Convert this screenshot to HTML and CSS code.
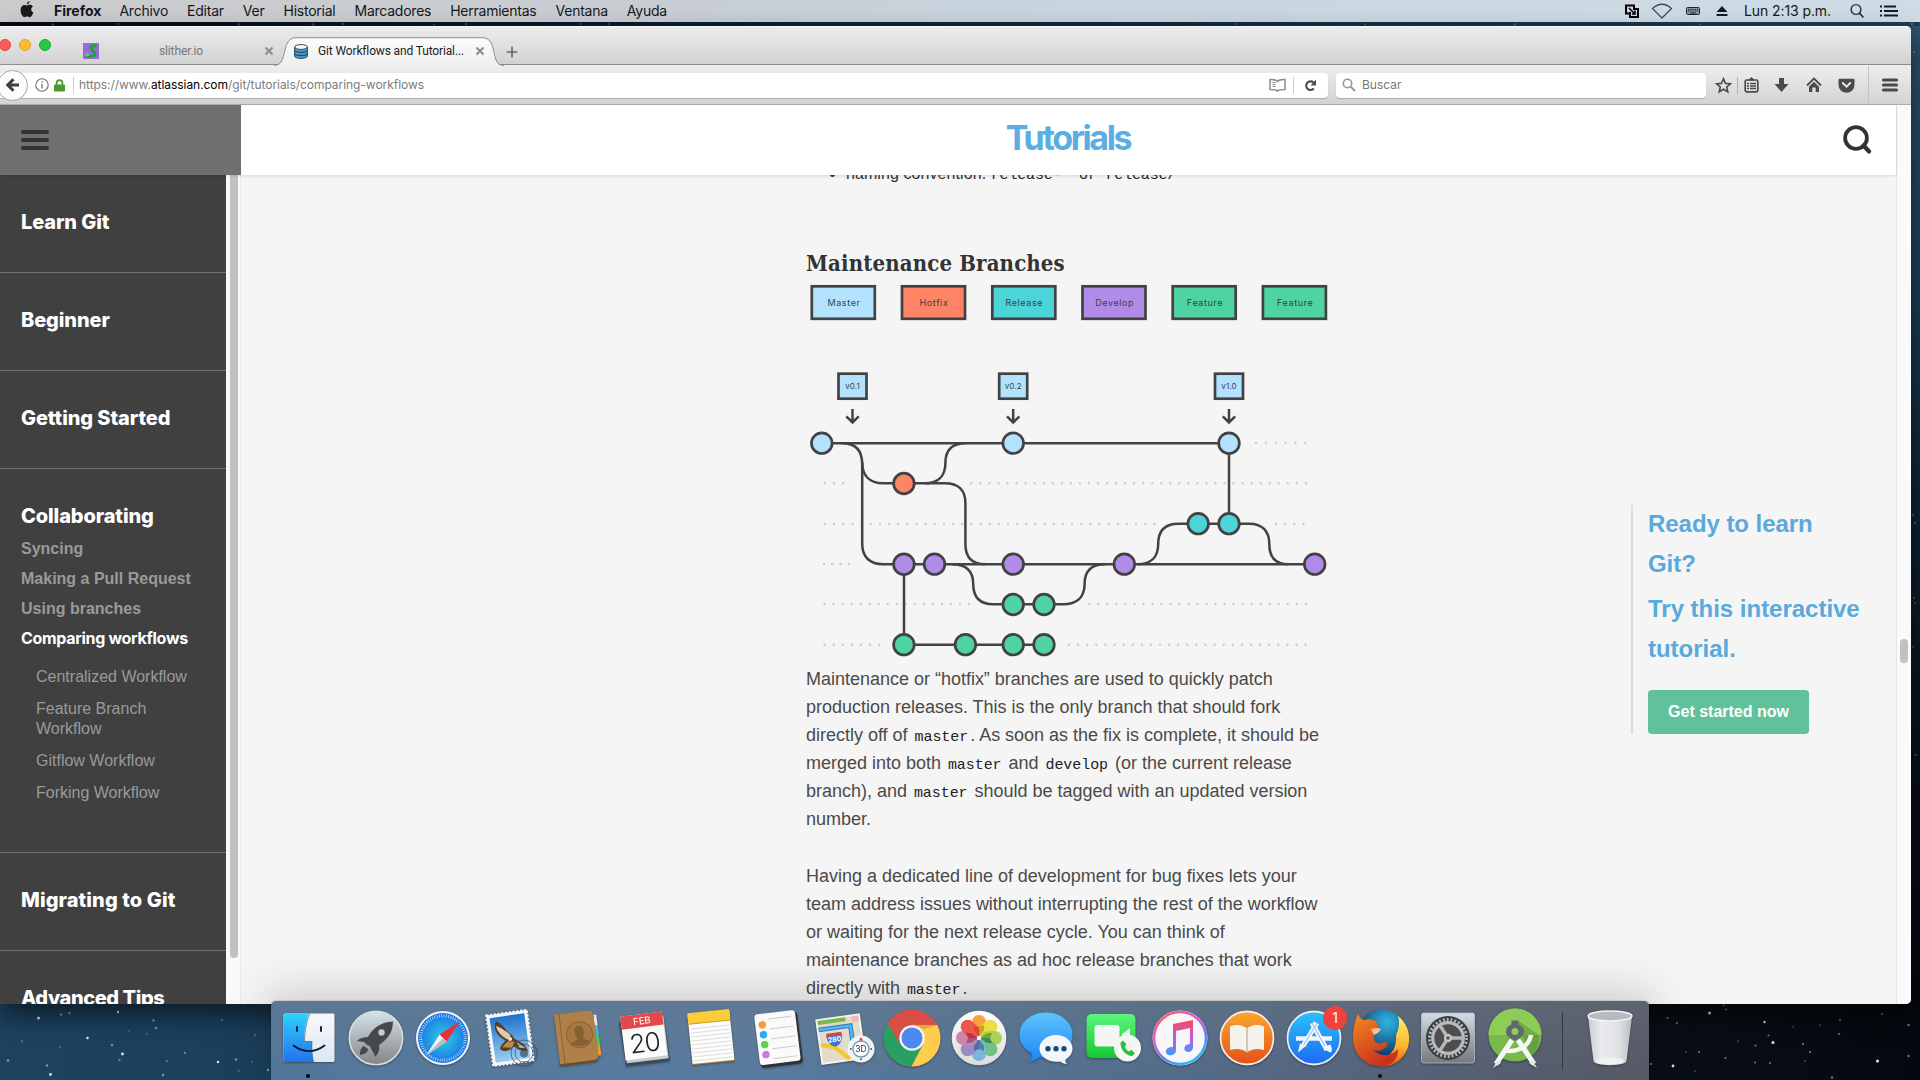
FILE: index.html
```html
<!DOCTYPE html>
<html lang="es">
<head>
<meta charset="utf-8">
<title>Git Workflows and Tutorials</title>
<link rel="stylesheet" href="styles.css">
</head>
<body>
<div class="desktop">
  <svg class="stars" width="1920" height="1080" viewBox="0 0 1920 1080" aria-hidden="true">
    <g fill="#fff">
      <g opacity=".85"><circle cx="38.500" cy="1018" r="1.500"/><circle cx="87.500" cy="1038" r="1.300"/><circle cx="122.500" cy="1054" r="1.400"/><circle cx="50.500" cy="1074.500" r="1.400"/><circle cx="118" cy="1012" r="1.200"/><circle cx="218" cy="1062" r="1.300"/><circle cx="1709.500" cy="1013" r="1.500"/><circle cx="1773" cy="1042.500" r="1.500"/><circle cx="1877.500" cy="1061" r="1.600"/><circle cx="1673" cy="1066" r="1.400"/><circle cx="1764.500" cy="1022" r="1.200"/></g>
      <g opacity=".45"><circle cx="61" cy="1014.500" r="1.200"/><circle cx="69.500" cy="1013" r="1.200"/><circle cx="153.500" cy="1020.500" r="1.200"/><circle cx="156" cy="1028" r="1.200"/><circle cx="112" cy="1045" r="1.200"/><circle cx="119.500" cy="1060" r="1.100"/><circle cx="47" cy="1065.500" r="1.300"/><circle cx="8" cy="1060.500" r="1.200"/><circle cx="163" cy="1075" r="1.200"/><circle cx="236" cy="1059.500" r="1.200"/><circle cx="268" cy="1070" r="1.200"/><circle cx="185" cy="1053" r="1"/><circle cx="1667.500" cy="1018" r="1.100"/><circle cx="1677" cy="1023" r="1"/><circle cx="1723.500" cy="1005.500" r="1"/><circle cx="1726" cy="1009.500" r="1"/><circle cx="1768.500" cy="1035.500" r="1"/><circle cx="1755.500" cy="1045.500" r="1.100"/><circle cx="1803" cy="1044" r="1.100"/><circle cx="1810" cy="1052" r="1.100"/><circle cx="1699" cy="1052" r="1"/><circle cx="1725.500" cy="1058" r="1.100"/><circle cx="1755" cy="1062.500" r="1"/><circle cx="1770" cy="1063" r="1"/><circle cx="1832" cy="1077.500" r="1.200"/><circle cx="1908.500" cy="1025" r="1.200"/><circle cx="1908.500" cy="1056" r="1.200"/><circle cx="1840" cy="1020" r="1"/><circle cx="1839" cy="1034" r="1"/><circle cx="1882" cy="1014" r="1"/><circle cx="1651" cy="1064" r="1"/></g>
      <g opacity=".22"><circle cx="22" cy="1041" r="1.200"/><circle cx="60" cy="1047" r="1"/><circle cx="129" cy="1031" r="1"/><circle cx="147" cy="1034" r="1"/><circle cx="167" cy="1061" r="1.300"/><circle cx="222" cy="1020" r="1.200"/><circle cx="255" cy="1035" r="1.200"/><circle cx="252" cy="1062" r="1"/><circle cx="239" cy="1071" r="1"/><circle cx="1686" cy="1052" r="1"/><circle cx="1738" cy="1041" r="1"/><circle cx="1793" cy="1027" r="1"/><circle cx="1820" cy="1025" r="1"/><circle cx="1805" cy="1061" r="1"/><circle cx="1695" cy="1071" r="1"/><circle cx="1913" cy="515" r="1.200"/><circle cx="1915" cy="523" r="1.200"/><circle cx="1914" cy="598" r="1.200"/><circle cx="1915" cy="603" r="1"/><circle cx="1913" cy="647" r="1"/><circle cx="1915.500" cy="755" r="1.300"/><circle cx="1914" cy="52" r="1.200"/><circle cx="1912" cy="24" r="1.200"/><circle cx="53" cy="24.500" r="1.200"/><circle cx="118" cy="24" r="1"/><circle cx="239" cy="24.500" r="1.200"/><circle cx="313" cy="24.500" r="1.200"/><circle cx="343" cy="24" r="1.200"/><circle cx="466" cy="24" r="1.300"/><circle cx="434" cy="24.500" r="1"/><circle cx="581" cy="24" r="1"/><circle cx="609" cy="24" r="1"/><circle cx="1515" cy="24.500" r="1.300"/><circle cx="1365" cy="24.500" r="1"/><circle cx="1236" cy="24" r="1"/><circle cx="1700" cy="24.500" r="1"/></g>
    </g>
  </svg>

  <header class="menubar">
    <svg class="apple" width="14" height="17" viewBox="0 0 14 17"><path fill="#1a1a1a" d="M9.600.3c.1 1.500-1.300 3.100-2.700 3.100C6.700 1.900 8.100.5 9.600.3zM7.100 4.500c.7 0 1.500-.7 2.800-.7 1.300 0 2.400.7 3 1.600-2.500 1.500-2.100 5 .5 6-.6 1.800-2.200 4.800-3.700 4.800-1 0-1.400-.6-2.600-.6-1.200 0-1.700.6-2.600.6C2.700 16.200.6 12.500.6 9.200c0-3.500 2.200-5.300 4.100-5.300 1.100 0 1.900.6 2.400.6z"/></svg>
    <nav class="menus">
      <b class="m-app">Firefox</b><span>Archivo</span><span>Editar</span><span>Ver</span><span>Historial</span><span>Marcadores</span><span>Herramientas</span><span>Ventana</span><span>Ayuda</span>
    </nav>
    <div class="status">
      <svg width="16" height="16" viewBox="0 0 16 16"><g fill="none" stroke="#000" stroke-width="2"><path d="M7 10.500H2v-8h8v3"/><path d="M9 6h5v8H6V9"/><path d="M5 5l6 6M11 7.500V11H8" stroke-width="1.500"/></g></svg>
      <svg width="22" height="16" viewBox="0 0 22 16"><path d="M1.500 5.500Q11-3 20.500 5.500L11 15z" fill="none" stroke="#3c4a55" stroke-width="1.200" stroke-linejoin="round"/></svg>
      <svg width="14" height="8" viewBox="0 0 14 8"><rect x=".5" y=".5" width="13" height="7" rx="1" fill="#8b969e" stroke="#1c262e"/><path d="M2 2.500h10M2 4h10" stroke="#1c262e" stroke-dasharray="1 .8"/><path d="M4 6h6" stroke="#1c262e"/></svg>
      <svg width="12" height="12" viewBox="0 0 12 12"><path d="M6 1l5.500 6H.5zM.5 9h11v2H.5z" fill="#141c22"/></svg>
      <span class="clock">Lun 2:13 p.m.</span>
      <svg width="16" height="16" viewBox="0 0 16 16"><circle cx="7" cy="6.500" r="4.900" fill="none" stroke="#26323a" stroke-width="1.400"/><path d="M10.400 10.200l4 4.300" stroke="#26323a" stroke-width="1.700"/></svg>
      <svg width="18" height="12" viewBox="0 0 18 12"><path d="M0 1.500h2M4 1.500h12M0 6h2M4 6h14M0 10.500h2M4 10.500h14" stroke="#141c22" stroke-width="1.800"/></svg>
    </div>
  </header>

  <div class="window">
    <div class="tabbar">
      <div class="lights"><i class="red"></i><i class="yellow"></i><i class="green"></i></div>
      <div class="tab">
        <svg width="16" height="16" viewBox="0 0 16 16"><rect width="16" height="16" fill="#a067dc"/><path d="M12.500 3C9.500 2 7.500 3.200 8.300 5.500S13 8.500 12 11s-5 2.500-8 2" fill="none" stroke="#14a834" stroke-width="2.800" stroke-linecap="round"/><circle cx="4.300" cy="11.500" r="2" fill="#5fc873"/></svg>
        <span class="tab-title">slither.io</span>
        <svg width="10" height="10" viewBox="0 0 10 10"><path d="M1.500 1.500l7 7M8.500 1.500l-7 7" stroke="#8c8c8c" stroke-width="2"/></svg>
      </div>
      <div class="tab active">
        <svg class="tab-shape" width="230" height="30" viewBox="0 0 230 30"><defs><linearGradient id="tabg" x2="0" y2="1"><stop stop-color="#fbfbfb"/><stop offset="1" stop-color="#efefef"/></linearGradient></defs><path d="M0 29C15 29 6 1 22 1H208C225 1 215 29 230 29V30H0z" fill="url(#tabg)"/><path d="M0 28.500C15 28.500 6 .7 22 .7H208C225 .7 215 28.500 230 28.500" fill="none" stroke="#8e8e8e"/></svg>
        <svg width="14" height="15" viewBox="0 0 14 15"><path d="M.6 3v9c0 3.200 12.800 3.200 12.800 0V3" fill="#4a9fd8" stroke="#2f4858"/><path d="M.6 6.300c0 2.800 12.800 2.800 12.800 0M.6 9.400c0 2.800 12.800 2.800 12.800 0" fill="none" stroke="#2f4858" stroke-width="1.300"/><ellipse cx="7" cy="3" rx="6.400" ry="2.400" fill="#f5f7f8" stroke="#2f4858"/></svg>
        <span class="tab-title">Git Workflows and Tutorial...</span>
        <svg width="10" height="10" viewBox="0 0 10 10"><path d="M1.500 1.500l7 7M8.500 1.500l-7 7" stroke="#8c8c8c" stroke-width="2"/></svg>
      </div>
      <svg class="newtab" width="12" height="12" viewBox="0 0 12 12"><path d="M6 .8v10.400M.8 6h10.400" stroke="#6a6a6a" stroke-width="1.700"/></svg>
    </div>

    <div class="toolbar">
      <div class="urlbar">
        <div class="back"><svg width="16" height="16" viewBox="0 0 16 16"><path d="M14 8H3M8.500 2.200L2.700 8l5.800 5.800" fill="none" stroke="#3f3f3f" stroke-width="3"/></svg></div>
        <svg width="14" height="14" viewBox="0 0 14 14"><circle cx="7" cy="7" r="6.200" fill="none" stroke="#6f6f6f" stroke-width="1.100"/><path d="M7 6v4.500M7 3.200v1.500" stroke="#6f6f6f" stroke-width="1.300"/></svg>
        <svg class="lock" width="11" height="13" viewBox="0 0 11 13"><path d="M2.600 6V4a2.900 2.900 0 0 1 5.800 0v2" fill="none" stroke="#4b9a27" stroke-width="1.800"/><rect y="5.500" width="11" height="7" rx="1" fill="#4b9a27"/></svg>
        <i class="sep"></i>
        <span class="url">https://www.<b>atlassian.com</b>/git/tutorials/comparing-workflows</span>
        <svg width="17" height="14" viewBox="0 0 17 14"><path d="M8.500 13C7.500 11.500 6 11.500 1 11.500v-10C5 1.500 7 1.300 8.500 3.500C10 1.300 12 1.500 16 1.500v10c-5 0-6.500 0-7.500 1.500z" fill="none" stroke="#8a8a8a" stroke-width="1.500"/><path d="M3.500 4.500h3M3.500 6.500h3M3.500 8.500h3" stroke="#8a8a8a"/></svg>
        <i class="sep"></i>
        <svg class="reload" width="13" height="13" viewBox="0 0 13 13"><path d="M9.800 9.500A4.300 4.300 0 1 1 9.500 3.600" fill="none" stroke="#4b4b4b" stroke-width="2.100"/><path d="M12 .6V6.500H6.500z" fill="#4b4b4b"/></svg>
      </div>
      <div class="search">
        <svg width="14" height="14" viewBox="0 0 14 14"><circle cx="5.500" cy="5.500" r="4.200" fill="none" stroke="#979797" stroke-width="1.600"/><path d="M8.600 8.600l4.400 4.400" stroke="#979797" stroke-width="2"/></svg>
        <span>Buscar</span>
      </div>
      <div class="tools">
        <svg width="17" height="17" viewBox="0 0 17 17"><path d="M8.500 1.800l2 4.600 4.900.4-3.700 3.200 1.100 4.900-4.300-2.600-4.300 2.600 1.100-4.900L1.600 6.800l4.900-.4z" fill="none" stroke="#4b4b4b" stroke-width="1.600"/></svg>
        <i class="sep"></i>
        <svg width="15" height="16" viewBox="0 0 15 16"><rect x="1.200" y="3" width="12.600" height="11.800" rx="1.500" fill="none" stroke="#4b4b4b" stroke-width="1.700"/><path d="M4 3.500L7.500 0 11 3.500z" fill="#4b4b4b"/><path d="M3 6.500h2M6 6.500h6M3 9h2M6 9h6M3 11.500h2M6 11.500h6" stroke="#4b4b4b" stroke-width="1.500"/></svg>
        <svg width="15" height="16" viewBox="0 0 15 16"><path d="M5 1h5v6h4.500l-7 8-7-8H5z" fill="#4b4b4b"/></svg>
        <svg width="16" height="16" viewBox="0 0 16 16"><path d="M1 8.500l7-7 7 7" fill="none" stroke="#4b4b4b" stroke-width="1.800"/><path d="M8 4.800l5 5V15H9.700v-4.500H6.300V15H3V9.800z" fill="#4b4b4b"/></svg>
        <svg width="17" height="15" viewBox="0 0 17 15"><path d="M2 .8h13c1 0 1.500.6 1.500 1.500v4.500a8 8 0 0 1-16 0V2.300C.5 1.400 1 .8 2 .8z" fill="#4b4b4b"/><path d="M4.800 5l3.700 3.700L12.200 5" fill="none" stroke="#e8e8e8" stroke-width="2" stroke-linecap="round"/></svg>
        <i class="sep tall"></i>
        <svg width="16" height="14" viewBox="0 0 16 14"><path d="M1.500 2h13M1.500 7h13M1.500 12h13" stroke="#4b4b4b" stroke-width="3.200" stroke-linecap="round"/></svg>
      </div>
    </div>

    <div class="page">
      <div class="page-main">
        <div class="page-head">
          <div class="head-menu"><i></i><i></i><i></i></div>
          <h1>Tutorials</h1>
          <svg class="head-search" width="30" height="30" viewBox="0 0 30 30"><circle cx="13" cy="13" r="10.900" fill="none" stroke="#333" stroke-width="3.800"/><path d="M20.500 20.500l5.600 6" stroke="#333" stroke-width="4.200" stroke-linecap="round"/></svg>
        </div>
        <div class="page-body">
          <aside class="sidebar">
            <section><h2 class="w1">Learn Git</h2></section>
            <section><h2 class="w1">Beginner</h2></section>
            <section><h2 class="w1">Getting Started</h2></section>
            <section class="open">
              <h2 class="w1">Collaborating</h2>
              <ul class="topics"><li>Syncing</li><li>Making a Pull Request</li><li>Using branches</li><li class="current">Comparing workflows</li></ul>
              <ul class="subtopics"><li>Centralized Workflow</li><li>Feature Branch Workflow</li><li>Gitflow Workflow</li><li>Forking Workflow</li></ul>
            </section>
            <section><h2 class="w2">Migrating to Git</h2></section>
            <section><h2 class="w3">Advanced Tips</h2></section>
          </aside>
          <div class="side-track"><i></i></div>
          <main class="content">
            <article>
              <ul class="bullets"><li>naming convention: <code>release-* or release/*</code></li></ul>
              <h3>Maintenance Branches</h3>
              <svg class="diagram" width="524" height="387" viewBox="806 278 524 387">
                <g stroke="#cbcbcb" stroke-width="2.400" stroke-linecap="round" fill="none">
                  <path d="M1256 443H1306" stroke-dasharray="0 9.850"/>
                  <path d="M825 483.300H845M971.400 483.300H1306.500" stroke-dasharray="0 9.040"/>
                  <path d="M825 523.700H1156M1276 523.700H1306.500" stroke-dasharray="0 9.150"/>
                  <path d="M824 564H850" stroke-dasharray="0 8.300"/>
                  <path d="M824.600 604.300H969M1089.300 604.300H1306.500" stroke-dasharray="0 9.020"/>
                  <path d="M824.600 644.700H880M1069 644.700H1306.500" stroke-dasharray="0 9.100"/>
                </g>
                <g stroke="#424242" stroke-width="2.500" fill="none">
                  <path d="M822 443.200H1229M904 564.200H1315M904 644.700H1044M904 564V645M1229 443V524"/>
                  <path d="M842 443.200C855 443.200 862.200 450 862.200 464V544C862.200 557 870 564.200 883 564.200H904"/>
                  <path d="M862.200 462C862.200 476 870 483.300 883 483.300H945C958 483.300 965.400 490 965.400 503V544C965.400 557 972 564.200 985 564.200"/>
                  <path d="M925 483.300C938 483.300 945.400 476 945.400 463S952 443.200 965.500 443.200"/>
                  <path d="M952 564.200C966 564.200 973.200 571 973.200 584S980 604.300 993.500 604.300H1063C1077 604.300 1084.600 597 1084.600 584S1091 564.200 1105 564.200"/>
                  <path d="M1138 564.200C1151 564.200 1158.200 557 1158.200 544S1165 523.700 1178.500 523.700H1249.500C1262 523.700 1269.300 531 1269.300 544S1275 564.200 1288 564.200"/>
                  <path d="M852.500 409V422.500M846.300 416.300L852.500 422.500L858.700 416.300M1013.200 409V422.500M1007 416.300L1013.200 422.500L1019.400 416.300M1229 409V422.500M1222.800 416.300L1229 422.500L1235.200 416.300"/>
                </g>
                <g stroke="#424242" stroke-width="2.700">
                  <g fill="#b3e2ff"><circle cx="821.800" cy="443.200" r="10.300"/><circle cx="1013.200" cy="443.200" r="10.300"/><circle cx="1229" cy="443.200" r="10.300"/><rect x="811.800" y="286.300" width="63" height="32.500"/><rect x="838.500" y="373.700" width="28" height="25"/><rect x="999.200" y="373.700" width="28" height="25"/><rect x="1215" y="373.700" width="28" height="25"/></g>
                  <g fill="#ff8465"><circle cx="903.900" cy="483.500" r="10.300"/><rect x="902" y="286.300" width="63" height="32.500"/></g>
                  <g fill="#4dd4d8"><circle cx="1198.200" cy="523.700" r="10.300"/><circle cx="1229" cy="523.700" r="10.300"/><rect x="992.300" y="286.300" width="63" height="32.500"/></g>
                  <g fill="#b18be8"><circle cx="903.900" cy="564.200" r="10.300"/><circle cx="934.500" cy="564.200" r="10.300"/><circle cx="1013.200" cy="564.200" r="10.300"/><circle cx="1124.300" cy="564.200" r="10.300"/><circle cx="1314.700" cy="564.200" r="10.300"/><rect x="1082.500" y="286.300" width="63" height="32.500"/></g>
                  <g fill="#4fd3a2"><circle cx="1013.200" cy="604.500" r="10.300"/><circle cx="1044" cy="604.500" r="10.300"/><circle cx="903.900" cy="644.700" r="10.300"/><circle cx="965.400" cy="644.700" r="10.300"/><circle cx="1013.200" cy="644.700" r="10.300"/><circle cx="1044" cy="644.700" r="10.300"/><rect x="1172.700" y="286.300" width="63" height="32.500"/><rect x="1262.900" y="286.300" width="63" height="32.500"/></g>
                </g>
                <g class="legend"><text x="844" y="306.300">Master</text><text x="934" y="306.300">Hotfix</text><text x="1024.300" y="306.300">Release</text><text x="1114.700" y="306.300">Develop</text><text x="1205" y="306.300">Feature</text><text x="1295.200" y="306.300">Feature</text></g>
                <g class="legend versions"><text x="852.500" y="389.300">v0.1</text><text x="1013.200" y="389.300">v0.2</text><text x="1229" y="389.300">v1.0</text></g>
              </svg>
              <p>Maintenance or “hotfix” branches are used to quickly patch<br>production releases. This is the only branch that should fork<br>directly off of <code>master</code>. As soon as the fix is complete, it should be<br>merged into both <code>master</code> and <code>develop</code> (or the current release<br>branch), and <code>master</code> should be tagged with an updated version<br>number.</p>
              <p>Having a dedicated line of development for bug fixes lets your<br>team address issues without interrupting the rest of the workflow<br>or waiting for the next release cycle. You can think of<br>maintenance branches as ad hoc release branches that work<br>directly with <code>master</code>.</p>
            </article>
            <div class="promo">
              <h4>Ready to learn Git?</h4>
              <h4>Try this interactive tutorial.</h4>
              <a class="button">Get started now</a>
            </div>
          </main>
        </div>
      </div>
      <div class="page-track"><i></i></div>
    </div>
  </div>

  <div class="dock">
    <div class="app running">
      <svg viewBox="-30 -30 60 60"><defs><linearGradient id="fa" x2="0" y2="1"><stop stop-color="#2ed0fb"/><stop offset="1" stop-color="#2472ee"/></linearGradient><linearGradient id="fb" x2="0" y2="1"><stop stop-color="#f8f8fb"/><stop offset="1" stop-color="#dde6f2"/></linearGradient></defs><rect x="-25.500" y="-24.500" width="51" height="48.500" rx="1.500" fill="url(#fb)"/><path d="M-24-24.500H0C-3.500-16-5-5-5 3.500H3C2.500 11 3 18 4.500 24H-24a1.500 1.500 0 0 1-1.500-1.500V-23a1.500 1.500 0 0 1 1.500-1.500z" fill="url(#fa)"/><path d="M1-24.500C-3-16-4.500-5-4.500 3.500H3C2.500 11 3 18 4.500 24" fill="none" stroke="#27658f" stroke-width=".7"/><path d="M-12-11v4M12-11v4M-15.500 7.500C-6 15 6 15 15.500 7.500" fill="none" stroke="#0c1a2a" stroke-width="1.900" stroke-linecap="round"/></svg>
    </div>
    <div class="app">
      <svg viewBox="-30 -30 60 60"><defs><linearGradient id="la" x2="0" y2="1"><stop stop-color="#d3e3ea"/><stop offset="1" stop-color="#858585"/></linearGradient></defs><circle r="26.700" fill="url(#la)" stroke="#d9dde0" stroke-width="1.600"/><path d="M17-16.500C5-16-3-10-8-1C-12-1-16 0-19 3L-12 4L-9 7L-6 8C-5 12-2 14-1 19C3 15 4 11 3 7C12 1 17-6 17-16.500zM-12 8C-16 10-16 14-16 17C-12 16-8 15-8 11z" fill="#45484c"/><circle cx="5.500" cy="-5.500" r="3.200" fill="#c3ccd1"/></svg>
    </div>
    <div class="app">
      <svg viewBox="-30 -30 60 60"><defs><radialGradient id="sa"><stop stop-color="#2fd0dc"/><stop offset="1" stop-color="#1b74e8"/></radialGradient></defs><circle r="27" fill="#f4f5f6"/><circle r="25" fill="url(#sa)"/><circle r="22.300" fill="none" stroke="#cde9f7" stroke-width="3" stroke-dasharray=".7 1.635"/><path d="M17.500-17L3.500 3.500L-3.500-3.500z" fill="#ee2e35"/><path d="M-17 17.500L-3.500-3.500L3.500 3.500z" fill="#f2f3f4"/><path d="M-17 17.500L0 0L3.500 3.500z" fill="#b9bec3"/></svg>
    </div>
    <div class="app">
      <svg viewBox="-30 -30 60 60"><defs><linearGradient id="ma" x2="0" y2="1"><stop stop-color="#1c74d2"/><stop offset="1" stop-color="#9ccdf0"/></linearGradient></defs><g transform="rotate(-8)"><rect x="-20.500" y="-25.500" width="41" height="51" fill="#f7f7f7" stroke="#f7f7f7" stroke-width="2" stroke-dasharray="2.200 1.600"/><rect x="-17.500" y="-22.500" width="35" height="45" fill="url(#ma)"/><path d="M-12-18C-16-12-13-4-5 2C-9 5-12 8-11 10C-6 14-1 12 3 9C7 14 12 16 16 15C15 9 10 5 4 1C3-4-1-5-3-9C-5-13-8-17-12-18z" fill="#5b3f24"/><path d="M-12-14C-12-8-8-3-3 1L1-2C0-6-4-7-6-10z" fill="#d9cbb5"/><path d="M6 5L14 12L8 11z" fill="#cdb893"/><path d="M-9 8L-3 3L4 4L1 10z" fill="#c08846"/><circle cx="0" cy="1" r="2" fill="#f1e9da"/></g><g fill="none" stroke="#3c536b" opacity=".75"><circle cx="14" cy="15" r="13"/><circle cx="14" cy="15" r="9"/></g><circle cx="14" cy="15.500" r="4" fill="#35506c" opacity=".7"/></svg>
    </div>
    <div class="app">
      <svg viewBox="-30 -30 60 60"><g transform="rotate(-7)"><path d="M16-21h6v11h-6z" fill="#e4e6e8"/><path d="M16-10h6v10h-6z" fill="#41b7df"/><path d="M16 0h6v10h-6z" fill="#51c95c"/><path d="M16 10h6v10h-6z" fill="#f39c2c"/><path d="M-20-24H14q5 0 5 5V21q0 5-5 5H-20z" fill="#6e4d25"/><path d="M-20-26H14q5 0 5 5V19q0 5-5 5H-20z" fill="#b0804a"/><path d="M-15-26V24" stroke="#8a6234"/><circle cx="3" cy="-3" r="13" fill="#a87843" stroke="#8d6535" stroke-width="1.200"/><path d="M3-12c4 0 5 3 4.500 6.500C7-2 6 0 6 1c1 2 6 2 7 4.500C10 9-4 9-7 5.500C-6 3-1 3 0 1C0 0-1-2-1.500-5.500C-2-9-1-12 3-12z" fill="#87602f"/></g></svg>
    </div>
    <div class="app">
      <svg viewBox="-30 -30 60 60"><g transform="rotate(-7)"><path d="M-23-18L-21 26H23L22-22z" fill="#3d4a57"/><rect x="-20" y="-20" width="42" height="43" fill="#c9cdd0"/><rect x="-21" y="-24" width="42" height="44" fill="#fbfbfb"/><rect x="-21" y="-24" width="42" height="13" fill="#e5484b"/><text class="cal-m" x="0" y="-14">FEB</text><text class="cal-d" x="0" y="14">20</text></g></svg>
    </div>
    <div class="app">
      <svg viewBox="-30 -30 60 60"><g transform="rotate(-6)"><rect x="-21" y="-24" width="42" height="49" fill="#b28a2a"/><rect x="-21" y="-25" width="42" height="49" fill="#fdfdfb"/><rect x="-21" y="-27" width="42" height="11" fill="#fbcd3a"/><path d="M-21-16H21" stroke="#c79a1e"/><path d="M-20-11H20M-20-7H20M-20-3H20M-20 1H20M-20 5H20M-20 9H20M-20 13H20M-20 17H20M-20 21H20" stroke="#d6d6d6" stroke-width=".8"/></g></svg>
    </div>
    <div class="app">
      <svg viewBox="-30 -30 60 60"><g transform="rotate(-7)"><rect x="-20" y="-24" width="42" height="52" rx="3.500" fill="#2c3239"/><rect x="-21" y="-26" width="41" height="51" rx="3.500" fill="#fafafa"/><path d="M-8-20H16M-7-10H17M-7 0H17M-7 10H17M-7 20H17" stroke="#c9c9c9" stroke-width=".9"/><circle cx="-14" cy="-15" r="3.700" fill="#fb9a2d"/><circle cx="-14" cy="-5" r="3.700" fill="#2ba9f1"/><circle cx="-14" cy="5" r="3.700" fill="#5fd349"/><circle cx="-14" cy="15" r="3.700" fill="#cb77e0"/></g></svg>
    </div>
    <div class="app">
      <svg viewBox="-30 -30 60 60"><g transform="translate(-4,0) rotate(-8)"><rect x="-23" y="-22" width="45" height="46" fill="#f6f4ee"/><rect x="-21" y="-20" width="41" height="42" fill="#e3dccb"/><path d="M-21-20H7v4H-21z" fill="#76b94c"/><path d="M13-20h7v6h-7z" fill="#f3b6bd"/><path d="M-21-11H11V22" fill="none" stroke="#2b7cc4" stroke-width="4.500"/><path d="M-21-11H11V22" fill="none" stroke="#53b7ee" stroke-width="2.500"/><path d="M-21 4L-8 8L6 22" fill="none" stroke="#f6c735" stroke-width="4.500"/><path d="M-14-6H1C2 2-1 6-6.500 8C-12 6-15 2-14-6z" fill="#3a74d4"/><path d="M-14-6H1V-3H-14z" fill="#d8433e"/><text class="shield" x="-6.500" y="3">280</text></g><circle cx="16" cy="11" r="13.500" fill="#f3f3f3"/><circle cx="16" cy="11" r="8" fill="#fff" stroke="#68a1ba" stroke-width="1.400"/><path d="M16-1l2 3.500h-4z" fill="#e33"/><path d="M5 11h1.500M25.500 11H27M16 20.500V22" stroke="#333" stroke-width="1.500"/><text class="threed" x="16" y="14.200">3D</text></svg>
    </div>
    <div class="app">
      <svg viewBox="-30 -30 60 60"><circle r="28.500" fill="#d94f45"/><path d="M-24.400-14.700A28.500 28.500 0 0 0-.5 28.500L11 7L-11 7z" fill="#28a063"/><path d="M25.300-13A28.500 28.500 0 0 1-.5 28.500L11 6.500L0-13z" fill="#fdce4e"/><path d="M0-13H25.300L12-9z" fill="#e3a63c"/><circle r="12.700" fill="#f5f5f5"/><circle r="10.500" fill="#4d8af0"/></svg>
    </div>
    <div class="app">
      <svg viewBox="-30 -30 60 60"><defs><linearGradient id="pa" x2="0" y2="1"><stop stop-color="#fff"/><stop offset="1" stop-color="#dcdcdc"/></linearGradient></defs><circle r="27.300" fill="url(#pa)"/><g opacity=".92"><rect x="-7" y="-23" width="14" height="21" rx="7" fill="#f89b2b"/><rect x="-7" y="-23" width="14" height="21" rx="7" fill="#e9dc33" transform="rotate(45)"/><rect x="-7" y="-23" width="14" height="21" rx="7" fill="#a9d04a" transform="rotate(90)"/><rect x="-7" y="-23" width="14" height="21" rx="7" fill="#67bd80" transform="rotate(135)"/><rect x="-7" y="-23" width="14" height="21" rx="7" fill="#73b1df" transform="rotate(180)"/><rect x="-7" y="-23" width="14" height="21" rx="7" fill="#9284c4" transform="rotate(225)"/><rect x="-7" y="-23" width="14" height="21" rx="7" fill="#cf7ba6" transform="rotate(270)"/><rect x="-7" y="-23" width="14" height="21" rx="7" fill="#ee4a3c" transform="rotate(315)"/></g><g opacity=".6"><path fill="#c8401c" d="M0-1L-5-8L-5-13L0-11z"/><path fill="#a08a10" d="M0-1L5-8L5-13L0-11z"/><path fill="#4f8c1c" d="M1 0L8-5L13-5L11 0z"/><path fill="#1d6b3a" d="M1 0L8 5L13 5L11 0z"/><path fill="#2a6b78" d="M0 1L5 8L5 13L0 11z"/><path fill="#34508c" d="M0 1L-5 8L-5 13L0 11z"/><path fill="#7a3c6c" d="M-1 0L-8 5L-13 5L-11 0z"/><path fill="#a81c34" d="M-1 0L-8-5L-13-5L-11 0z"/></g><circle r="2" fill="#fff"/></svg>
    </div>
    <div class="app">
      <svg viewBox="-30 -30 60 60"><defs><linearGradient id="ga" x2="0" y2="1"><stop stop-color="#5fc4fb"/><stop offset="1" stop-color="#1b86f8"/></linearGradient></defs><path d="M0-25.500C15-25.500 26.500-16 26.500-3S15 19.500 0 19.500C-3 19.500-5 19.300-7 19C-9 21.500-12.500 23.300-17 23.500C-14.500 21-13.500 18.500-14 15.500C-21.500 11.500-26.500 5-26.500-3C-26.500-16-15-25.500 0-25.500z" fill="url(#ga)"/><path d="M10-3C19-3 26.500 3 26.500 10.500C26.500 15 24 19 19.500 21.500C19 23 19.500 24.500 21 26C18 26 15.500 24.500 14 23.500C3 25-6.500 19-6.500 10.500C-6.500 3 1-3 10-3z" fill="#f3f6f9"/><g fill="#154a84"><circle cx="2" cy="10.800" r="2.700"/><circle cx="10" cy="10.800" r="2.700"/><circle cx="18" cy="10.800" r="2.700"/></g></svg>
    </div>
    <div class="app">
      <svg viewBox="-30 -30 60 60"><defs><linearGradient id="va" x2="0" y2="1"><stop stop-color="#5cf57c"/><stop offset="1" stop-color="#17c631"/></linearGradient></defs><rect x="-26.500" y="-24" width="49" height="44" rx="5" fill="url(#va)"/><rect x="-18.500" y="-13" width="25" height="21.500" rx="3" fill="#f4f6f4"/><path d="M9-4L17-10V4H9z" fill="#e9ece9"/><circle cx="14.500" cy="10" r="13.500" fill="#f4f6f4"/><path d="M10 2.500L7.500 4.500C7 11 13 18 19 18L22 15.500L18.500 11.800L16 13.500C14 12.500 12.500 10.500 12 8.500L13.500 6.300z" fill="#29c143"/></svg>
    </div>
    <div class="app">
      <svg viewBox="-30 -30 60 60"><defs><linearGradient id="ia" x1=".2" y1="0" x2=".8" y2="1"><stop stop-color="#ff5b62"/><stop offset=".35" stop-color="#e05bd6"/><stop offset=".65" stop-color="#6d7cf4"/><stop offset="1" stop-color="#1fc8f4"/></linearGradient><linearGradient id="ib" x2="0" y2="1"><stop stop-color="#fb4a57"/><stop offset=".55" stop-color="#b45cf0"/><stop offset="1" stop-color="#3aa0f6"/></linearGradient></defs><circle r="27.500" fill="#eef2f6"/><circle r="26" fill="#f7f7f9" stroke="url(#ia)" stroke-width="2.600"/><path d="M-7-14L13-18V9C13 13 9 15 6 13.500C3 12 4 6 10 6V-10L-4-7V12C-4 16-8 18-11.500 17C-16 15.500-15 8.500-7 9z" fill="url(#ib)"/></svg>
    </div>
    <div class="app">
      <svg viewBox="-30 -30 60 60"><defs><linearGradient id="ba" x2="0" y2="1"><stop stop-color="#fda62c"/><stop offset="1" stop-color="#e3511a"/></linearGradient></defs><circle r="26.500" fill="url(#ba)" stroke="#f3ece6" stroke-width="1.800"/><path d="M-17-11.500C-10-14-4-13 0-9.500C4-13 10-14 17-11.500V12C10 10 4 11 0 14.500C-4 11-10 10-17 12z" fill="#f5f1ec"/><path d="M0-9.500V14.500" stroke="#b8a898" stroke-width="1.200"/></svg>
    </div>
    <div class="app">
      <svg viewBox="-30 -30 60 60"><defs><linearGradient id="aa" x2="0" y2="1"><stop stop-color="#2bc1fb"/><stop offset="1" stop-color="#1d6bf1"/></linearGradient></defs><circle r="26.500" fill="url(#aa)" stroke="#e6eef5" stroke-width="1.800"/><path d="M-18 .5H18" stroke="#eef4fa" stroke-width="4.500"/><path d="M-2-15L13 12M3-15L-11 8" stroke="#f6f9fc" stroke-width="4.800"/><path d="M-2-15L13 12M3-15L-11 8" stroke="#7fb5ee" stroke-width="1"/><path d="M10.500 8.500l6 -2C18 10 18.500 12 17 14.500C14 14 11.500 12 10.500 8.500zM-14 5.500l5 3L-16 14.500z" fill="#f6f9fc"/></svg>
      <span class="badge">1</span>
    </div>
    <div class="app running">
      <svg viewBox="-30 -30 60 60"><defs><radialGradient id="xa" cx=".6" cy=".25" r=".7"><stop stop-color="#2fb6e4"/><stop offset="1" stop-color="#10305f"/></radialGradient><linearGradient id="xb" x2=".5" y2="1"><stop stop-color="#f68a1f"/><stop offset="1" stop-color="#c8321c"/></linearGradient><linearGradient id="xc" x2="0" y2="1"><stop stop-color="#fff06a"/><stop offset=".6" stop-color="#fdb42c"/><stop offset="1" stop-color="#e0541c"/></linearGradient></defs><circle cx="1" cy="-3" r="25.500" fill="url(#xa)"/><path d="M17-22C25-16 29-6 28 3C27 18 15 28.500 0 28.500L2 20C12 17 16 8 15-3C18-8 19-16 17-22z" fill="url(#xc)"/><path d="M-23-24C-21-20-19-18-16-18C-13-19-9-19-6-17C-4-16-3-13-4-10L0-9C-1-6-5-4-7-3C-9 2-4 7 1 5C4 3 7 4 6 7C4 12-3 14-8 12C-2 18 9 20 17 11C17 22 10 28.500 0 28.500C-16 28.500-28 16-28 0C-28-8-26-18-23-24z" fill="url(#xb)"/><path d="M-10-9L-4-10L0-9C-1-6-5-4-7-3z" fill="#f9c38a"/></svg>
    </div>
    <div class="app">
      <svg viewBox="-30 -30 60 60"><defs><linearGradient id="ea" x2="0" y2="1"><stop stop-color="#cfdde4"/><stop offset="1" stop-color="#76797c"/></linearGradient></defs><rect x="-26.500" y="-25" width="53" height="50" rx="2" fill="url(#ea)" stroke="#b9c2c8" stroke-width=".8"/><circle r="22" fill="#3a3c3e"/><circle r="18.500" fill="none" stroke="#b4b6b8" stroke-width="3" stroke-dasharray="2 1.875"/><circle r="15.300" fill="#4c4e50" stroke="#b9bbbd" stroke-width="3.200"/><path d="M0 0L-8-12.500M0 0L15 0M0 0L-8 12.500" stroke="#b4b6b8" stroke-width="3.400"/><circle r="4.200" fill="#c3c5c7"/><circle r="1.800" fill="#555"/></svg>
    </div>
    <div class="app">
      <svg viewBox="-30 -30 60 60"><circle cy="-3" r="26.500" fill="#78b94a"/><path d="M-26.500-3A26.500 26.500 0 0 1 26.500-3z" fill="#8fcb57"/><path d="M2-18L24-3A26 26 0 0 1 16 18z" fill="#4f8535" opacity=".45"/><path d="M-3.500-17.500h7v4c4 1.500 5.500 4 5.500 7S6 0 3 1L0 3L-3 1C-6 0-9-3-9-6.500s2-5.500 5.500-7z" fill="#5f6a70"/><circle cy="-6.500" r="3.500" fill="#8fcb57"/><path d="M-3 2L-19 26M3 2L19 26" stroke="#f5f5f5" stroke-width="5"/><path d="M-12 12C0 15 14 10 16-3" fill="none" stroke="#f5f5f5" stroke-width="4.500"/><path d="M-17 21L-22 30L-14 25zM17 21L22 30L14 25z" fill="#e4e4e4"/></svg>
    </div>
    <i class="dock-sep"></i>
    <div class="app">
      <svg viewBox="-30 -30 60 60"><defs><linearGradient id="ta"><stop stop-color="#c9cdd2"/><stop offset=".3" stop-color="#e9ebed"/><stop offset=".7" stop-color="#dfe1e4"/><stop offset="1" stop-color="#b9bdc3"/></linearGradient></defs><path d="M-22-22L-16.500 23C-16 28.500 16 28.500 16.500 23L22-22z" fill="url(#ta)"/><ellipse cy="-22" rx="22" ry="5" fill="#b6bbc1" stroke="#f3f4f5" stroke-width="1.500"/><ellipse cy="23" rx="14" ry="3.500" fill="#f3f4f5" opacity=".8"/></svg>
    </div>
  </div>
</div>
</body>
</html>
```
FILE: styles.css
```css
* { box-sizing: border-box; }
body { margin: 0; font-family: "Liberation Sans", Arial, sans-serif; }
svg { display: block; flex: none; overflow: visible; }
ul { list-style: none; margin: 0; padding: 0; }
h1, h2, h3, h4, p { margin: 0; }

.desktop {
  position: relative;
  width: 1920px;
  height: 1080px;
  overflow: hidden;
  display: flex;
  flex-direction: column;
  background:
    linear-gradient(90deg, #060b12, #0a2034 40%, #1d3d55) 0 0 / 100% 26px no-repeat,
    linear-gradient(180deg, #2e5470, #1b3c55 30%, #0c2233 50%, #0a1018 75%, #05070c) 100% 0 / 30px 1004px no-repeat,
    linear-gradient(90deg, #1d4361, #1b3f5b 15%, #0a1018 84%, #05080e);
}
.stars { position: absolute; left: 0; top: 0; }

/* menu bar */
.menubar {
  position: relative;
  height: 22px;
  flex: none;
  display: flex;
  align-items: center;
  padding: 0 22px 0 20px;
  background: linear-gradient(90deg, #cbcbcd, #c8cdd3 35%, #c7d5e0 55%, #cfdce5);
  font: 14px/22px Inter, sans-serif;
  color: #14181c;
}
.apple { margin-top: -4px; }
.menus { display: flex; gap: 19px; margin-left: 20px; letter-spacing: -.24px; flex: 1; }
.m-app { font-weight: 700; letter-spacing: 0; margin-right: -1px; }
.status { display: flex; align-items: center; }
.status svg:nth-child(1) { margin-right: 11px; }
.status svg:nth-child(2) { margin-right: 13px; }
.status svg:nth-child(3) { margin-right: 16px; }
.status svg:nth-child(4) { margin-right: 16px; }
.clock { letter-spacing: -.09px; margin-right: 18px; }
.clock + svg { margin-right: 15px; }

/* browser window */
.window {
  position: relative;
  width: 1911px;
  height: 978px;
  margin-top: 4px;
  display: flex;
  flex-direction: column;
  border-radius: 0 5px 5px 0;
  overflow: hidden;
  background: #f5f5f5;
  box-shadow: 0 12px 26px rgba(0, 0, 0, .55);
}
.tabbar {
  height: 39px;
  flex: none;
  display: flex;
  align-items: center;
  background: linear-gradient(#ececec, #d2d2d2);
  border-top: 1px solid #f8f8f8;
  border-bottom: 1px solid #8e8e8e;
  font: 12px/16px Roboto, sans-serif;
}
.lights { display: flex; gap: 8px; margin: -1px 0 0 -1px; padding-bottom: 1px; }
.lights i { width: 12px; height: 12px; border-radius: 50%; border: 1px solid; }
.lights .red { background: #fc5b57; border-color: #e2463f; }
.lights .yellow { background: #fdbc2f; border-color: #dfa023; }
.lights .green { background: #28c840; border-color: #1dab2e; }
.tab { display: flex; align-items: center; padding-top: 11px; height: 37px; }
.lights + .tab { margin-left: 32px; width: 191px; color: #777; }
.lights + .tab .tab-title { flex: 1; text-align: center; padding-right: 1px; letter-spacing: -.1px; }
.tab.active { position: relative; width: 230px; padding-left: 20px; color: #1d1d1d; }
.tab.active .tab-title { width: 146px; margin: 0 11px 0 10px; white-space: nowrap; letter-spacing: -.14px; }
.tab.active svg, .tab.active .tab-title { position: relative; }
.tab.active .tab-shape { position: absolute; left: 0; top: 10px; }
.newtab { margin: 12px 0 0 2px; }

.toolbar {
  height: 40px;
  flex: none;
  display: flex;
  align-items: center;
  padding: 1px 13px 0 0;
  background: linear-gradient(#eeeeee, #d3d3d3);
  border-bottom: 1px solid #adadad;
  font: 12px/16px Inter, sans-serif;
}
.urlbar {
  width: 1328px;
  height: 25px;
  flex: none;
  display: flex;
  align-items: center;
  padding-right: 11px;
  background: #fff;
  border-radius: 0 4px 4px 0;
  box-shadow: 0 1px 1px rgba(0, 0, 0, .2);
}
.back {
  width: 31px; height: 31px;
  flex: none;
  margin: 0 7px 0 -3px;
  border-radius: 50%;
  border: 1px solid #a5a5a5;
  background: #fcfcfc;
  display: flex; align-items: center; justify-content: center;
}
.lock { margin-left: 5px; }
.sep { width: 1px; height: 17px; flex: none; background: #cfcfcf; margin: 0 5px 0 8px; }
.url { flex: 1; letter-spacing: -.05px; color: #7c7c7c; }
.url b { font-weight: 400; color: #000; }
.url ~ .sep { margin: 0 10px 0 7px; }
.search {
  width: 370px;
  height: 25px;
  flex: none;
  margin-left: 8px;
  padding: 0 0 0 6px;
  display: flex;
  align-items: center;
  gap: 6px;
  background: #fff;
  border-radius: 4px;
  box-shadow: 0 1px 1px rgba(0, 0, 0, .2);
  color: #777;
}
.tools { display: flex; align-items: center; flex: 1; margin-left: 9px; }
.tools .sep { background: #b2b2b2; margin: 0 6px 0 5px; }
.tools .sep + svg { margin-right: 15px; }
.tools svg:nth-child(4) { margin-right: 17px; }
.tools svg:nth-child(5) { margin-right: 16px; }
.tools .sep.tall { height: 38px; background: #c4c4c4; margin: 0 13px; }
.tools .sep.tall + svg { margin: 0; }

/* web page */
.page { flex: 1; min-height: 0; display: flex; }
.page-main { width: 1896px; display: flex; flex-direction: column; min-height: 0; }
.page-head {
  height: 70px;
  flex: none;
  display: flex;
  align-items: center;
  background: #fff;
  position: relative;
  box-shadow: 0 1px 3px rgba(0, 0, 0, .12);
}
.head-menu {
  width: 241px;
  height: 70px;
  padding: 25px 0 0 21px;
  display: flex;
  flex-direction: column;
  gap: 4px;
  background: #707070;
}
.head-menu i { width: 28px; height: 4px; border-radius: 2px; background: #333; }
.page-head h1 {
  flex: 1;
  text-align: center;
  font: 700 34px/40px Inter, sans-serif;
  letter-spacing: -2.35px;
  color: #5aaee2;
  padding: 0 1px 5px 0;
}
.head-search { margin: 0 23px 0 -53px; }

.page-body { flex: 1; min-height: 0; display: flex; overflow: hidden; }
.sidebar { width: 226px; flex: none; background: #404040; color: #fff; overflow: hidden; }
.sidebar section { padding: 35px 0 38px 21px; border-bottom: 1px solid #707070; }
.sidebar section.open { padding-bottom: 49px; }
.sidebar h2 { font: 800 20px/24px Inter, sans-serif; }
.w1 { letter-spacing: -.1px; }
.w2 { letter-spacing: .1px; }
.w3 { letter-spacing: -.42px; }
.topics { padding-top: 6px; font: 700 16px/30px "Liberation Sans", sans-serif; color: #9a9a9a; }
.topics .current { font-family: Inter, sans-serif; letter-spacing: -.31px; color: #fff; margin-top: -1px; }
.subtopics { display: flex; flex-direction: column; gap: 12px; padding: 14px 50px 0 15px; font-size: 16px; line-height: 20px; color: #9a9a9a; }
.subtopics li:first-child { white-space: nowrap; }
.side-track, .page-track { width: 15px; flex: none; background: #fafafa; }
.side-track { border-right: 1px solid #e8e8e8; padding: 0 0 0 4px; }
.side-track i { display: block; width: 8px; height: 783px; border-radius: 0 0 4px 4px; background: #c1c1c1; }
.page-track { border-left: 1px solid #e4e4e4; padding: 534px 0 0 3px; }
.page-track i { display: block; width: 8px; height: 24px; border-radius: 4px; background: #c1c1c1; }

.content { flex: 1; display: flex; align-items: flex-start; background: #f5f5f5; overflow: hidden; }
article { width: 540px; margin: -15px 0 0 565px; font-size: 18px; line-height: 28px; letter-spacing: -.01px; color: #4a4a4a; flex: none; }
article code { font: 15px/1 "Liberation Mono", monospace; letter-spacing: -.07px; color: #222; margin: 0 2px; }
.bullets li { display: list-item; list-style: disc; margin-left: 40px; height: 28px; white-space: nowrap; font-size: 16px; letter-spacing: .08px; color: #333; }
.bullets code { letter-spacing: -.17px; margin: 0; }
article h3 { margin-top: 60px; font: 700 22px/30px "DejaVu Serif Condensed", "DejaVu Serif", serif; letter-spacing: .14px; color: #333; }
article p { white-space: nowrap; }
article p + p { margin-top: 28.500px; }
.legend { font: 9px Inter, sans-serif; letter-spacing: .6px; text-anchor: middle; fill: #35424a; }
.versions { font-size: 8px; letter-spacing: .1px; }

.promo { width: 240px; margin: 330px 0 0 285px; padding-left: 15px; border-left: 2px solid #d8dee0; }
.promo h4 { font: 700 24px/40px "Liberation Sans", sans-serif; letter-spacing: -.02px; color: #5aa9dc; padding-right: 5px; }
.promo h4:first-child { padding: 0 40px 0 0; margin-top: -1px; letter-spacing: -.05px; }
.promo h4 + h4 { margin-top: 5px; }
.button { display: block; width: 161px; height: 44px; margin-top: 21px; border-radius: 4px; background: #60c19b; color: #fff; font: 700 16px/43px "Liberation Sans", sans-serif; text-align: center; }

/* dock */
.dock {
  position: absolute;
  left: 271px;
  top: 1001px;
  width: 1378px;
  height: 79px;
  display: flex;
  padding: 7px 0 0 7.500px;
  border-radius: 5px 5px 0 0;
  background: linear-gradient(180deg, rgba(110, 120, 130, .35), transparent), linear-gradient(90deg, #52779b, #587ba0 35%, #526f8e 60%, #54637a 80%, #555864);
  box-shadow: 0 -4px 44px 6px rgba(0, 0, 0, .16), 0 0 2px rgba(0, 0, 0, .4);
}
.app { position: relative; width: 60px; height: 72px; margin-right: 7.050px; flex: none; }
.app svg { width: 60px; height: 60px; filter: drop-shadow(0 1px 1px rgba(0, 0, 0, .35)); }
.running::after { content: ""; position: absolute; left: 27px; top: 66px; width: 4px; height: 4px; border-radius: 50%; background: #000; }
.badge { position: absolute; left: 39px; top: -2px; width: 24px; height: 24px; border-radius: 50%; background: #f0413d; color: #fff; font: 14px/24px Inter, sans-serif; text-align: center; }
.dock-sep { width: 1px; height: 58px; margin: 4px 17px 0 10px; background: #35383f; flex: none; }
.cal-m { font: 9.500px Inter, sans-serif; text-anchor: middle; fill: #fff; }
.cal-d { font: 300 26px Inter, sans-serif; text-anchor: middle; letter-spacing: -1px; fill: #222; }
.shield { font: 700 7px Inter, sans-serif; text-anchor: middle; fill: #fff; }
.threed { font: 8.500px Inter, sans-serif; text-anchor: middle; fill: #333; }
```
